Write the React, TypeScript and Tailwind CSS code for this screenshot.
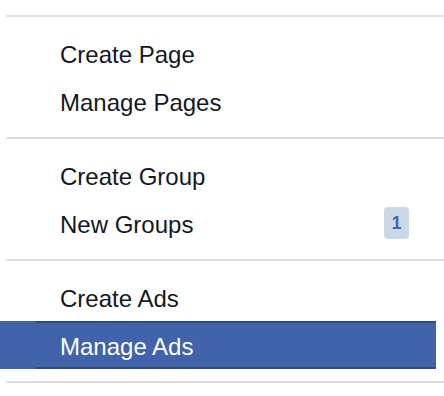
const groups: { label: string; badge?: number; active?: boolean }[][] = [
  [{ label: "Create Page" }, { label: "Manage Pages" }],
  [{ label: "Create Group" }, { label: "New Groups", badge: 1 }],
  [{ label: "Create Ads" }, { label: "Manage Ads", active: true }],
];

function Divider() {
  return <div className="ml-[6px] h-[2px] bg-[#dddfe2]" />;
}

function Row({ label, badge, active }: { label: string; badge?: number; active?: boolean }) {
  return (
    <div className={`mr-[8px] flex h-[48px] ${active ? "bg-[#4163aa] text-white" : "text-[#141823]"}`}>
      <div className="w-[36px] shrink-0" />
      <div
        className={`flex flex-1 items-center justify-between border-y-2 pl-[24px] pr-[27px] ${
          active ? "border-y-[#2c4b82]" : "border-transparent"
        }`}
      >
        <span className="pt-[3px] text-[24px] leading-[44px]">{label}</span>
        {badge !== undefined && (
          <span className="flex h-[32px] w-[25px] items-center justify-center rounded-[4px] bg-[#cdd8e6] text-[18px] font-bold text-[#4267b2]">
            {badge}
          </span>
        )}
      </div>
    </div>
  );
}

export default function App() {
  return (
    <div
      className="h-[396px] w-[444px] overflow-hidden bg-white pt-[15px]"
      style={{ fontFamily: '"Liberation Sans", Arial, sans-serif' }}
    >
      {groups.map((items, i) => (
        <div key={i}>
          <Divider />
          <div className="py-[12px]">
            {items.map((it) => (
              <Row key={it.label} {...it} />
            ))}
          </div>
        </div>
      ))}
      <Divider />
    </div>
  );
}
